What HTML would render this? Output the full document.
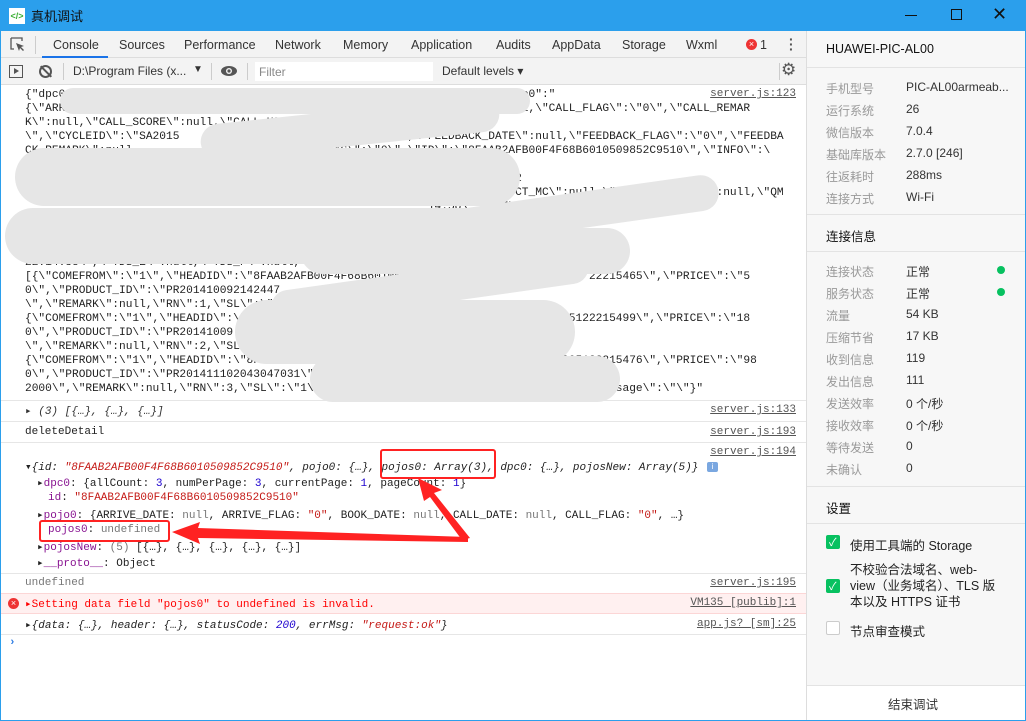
<!DOCTYPE html>
<html><head><meta charset="utf-8"><style>
*{margin:0;padding:0;box-sizing:border-box}
body{width:1026px;height:721px;overflow:hidden;background:#fff;font-family:"Liberation Sans","Noto Sans CJK SC",sans-serif;position:relative;font-size:12px;color:#333}
.abs{position:absolute}
#title{left:0;top:0;width:1026px;height:31px;background:#2b9fec;}
#win{left:0;top:31px;width:1026px;height:690px;border:1px solid #2b9fec;border-top:none}
.tab{position:absolute;top:38px;font-size:12.5px;color:#333}
.mono{font-family:"Liberation Mono","Noto Sans CJK SC",monospace;font-size:11px;white-space:pre;color:#222}
.ln{position:absolute;left:25px}
.src{position:absolute;right:230px;font-family:"Liberation Mono",monospace;font-size:11px;color:#555;text-decoration:underline}
.sep{position:absolute;left:1px;width:805px;height:1px;background:#e6e6e6}
.blob{position:absolute;background:#e6e6e6;border-radius:14px}
.rp{position:absolute;left:826px;font-size:12px;color:#999}
.rv{position:absolute;left:906px;font-size:12px;color:#333}
.rsep{position:absolute;left:807px;width:218px;height:1px;background:#e3e3e3}
.purple{color:#881391}.red{color:#c41a16}.blue{color:#1c00cf}.gray{color:#777}
.cb{position:absolute;left:826px;width:14px;height:14px;border-radius:2px;background:#07c160}
</style></head><body>
<div id="title" class="abs">
 <div class="abs" style="left:9px;top:8px;width:16px;height:16px;background:#fff;color:#3cb035;font-size:9px;font-weight:bold;text-align:center;line-height:16px">&lt;/&gt;</div>
 <div class="abs" style="left:31px;top:6px;font-size:13px;color:#111">真机调试</div>
 <div class="abs" style="left:905px;top:15px;width:12px;height:1px;background:#111"></div>
 <div class="abs" style="left:951px;top:9px;width:11px;height:11px;border:1px solid #111"></div>
 <div class="abs" style="left:992px;top:4px;font-size:18px;color:#111">✕</div>
</div>
<div id="win" class="abs"></div>
<div class="abs" style="left:1px;top:31px;width:805px;height:27px;background:#f3f3f3;border-bottom:1px solid #ddd"></div>
<svg class="abs" style="left:10px;top:37px" width="16" height="16"><path d="M1 1h11v3M1 1v11h3" fill="none" stroke="#555" stroke-width="1.3"/><path d="M6 6l8 3-3 1 3 3-1 1-3-3-1 3z" fill="#555"/></svg>
<div class="abs" style="left:35px;top:36px;width:1px;height:18px;background:#ccc"></div>
<div class="tab" style="left:53px">Console</div>
<div class="abs" style="left:42px;top:56px;width:66px;height:2px;background:#1a73e8"></div>
<div class="tab" style="left:119px">Sources</div>
<div class="tab" style="left:184px">Performance</div>
<div class="tab" style="left:275px">Network</div>
<div class="tab" style="left:343px">Memory</div>
<div class="tab" style="left:411px">Application</div>
<div class="tab" style="left:496px">Audits</div>
<div class="tab" style="left:552px">AppData</div>
<div class="tab" style="left:622px">Storage</div>
<div class="tab" style="left:686px">Wxml</div>
<div class="abs" style="left:746px;top:39px;width:11px;height:11px;border-radius:50%;background:#e33;color:#fff;font-size:9px;line-height:11px;text-align:center">×</div>
<div class="tab" style="left:760px">1</div>
<div class="abs" style="left:789px;top:37px;font-size:14px;color:#555;line-height:5px;font-weight:bold">·<br>·<br>·</div>
<div class="abs" style="left:1px;top:58px;width:805px;height:27px;background:#f3f3f3;border-bottom:1px solid #ddd"></div>
<div class="abs" style="left:9px;top:65px;width:14px;height:13px;border:1px solid #555"></div>
<div class="abs" style="left:14px;top:68px;width:0;height:0;border-left:5px solid #555;border-top:3.5px solid transparent;border-bottom:3.5px solid transparent"></div>
<div class="abs" style="left:39px;top:65px;width:13px;height:13px;border:2px solid #555;border-radius:50%"></div>
<div class="abs" style="left:45px;top:64px;width:2px;height:15px;background:#555;transform:rotate(-45deg)"></div>
<div class="abs" style="left:63px;top:63px;width:1px;height:17px;background:#ccc"></div>
<div class="abs" style="left:73px;top:64px;font-size:12px;color:#333">D:\Program Files (x...</div>
<div class="abs" style="left:193px;top:64px;font-size:10px;color:#333">▼</div>
<div class="abs" style="left:211px;top:63px;width:1px;height:17px;background:#ccc"></div>
<svg class="abs" style="left:220px;top:64px" width="18" height="14"><ellipse cx="9" cy="7" rx="8" ry="5" fill="#555"/><circle cx="9" cy="7" r="3" fill="#f3f3f3"/><circle cx="9" cy="7" r="1.6" fill="#555"/></svg>
<div class="abs" style="left:247px;top:63px;width:1px;height:17px;background:#ccc"></div>
<div class="abs" style="left:255px;top:62px;width:178px;height:19px;background:#fff"></div>
<div class="abs" style="left:259px;top:65px;font-size:12px;color:#888">Filter</div>
<div class="abs" style="left:442px;top:64px;font-size:12px;color:#333">Default levels ▾</div>
<div class="abs" style="left:779px;top:63px;width:1px;height:17px;background:#ccc"></div>
<div class="abs" style="left:781px;top:60px;font-size:17px;color:#555">⚙</div>
<div class="mono" style="position:absolute;left:25px;top:88px;line-height:14px;font-size:11.2px">{"dpc0                                                              ","pojo0":"
{\"ARR                                                                :null,\"CALL_FLAG\":\"0\",\"CALL_REMAR
K\":null,\"CALL_SCORE\":null,\"CALL_USER\"
\",\"CYCLEID\":\"SA2015                                  ,\"FEEDBACK_DATE\":null,\"FEEDBACK_FLAG\":\"0\",\"FEEDBA
CK_REMARK\":null                  ,\"FINISH_FLAG\":\"0\",\"ID\":\"8FAAB2AFB00F4F68B6010509852C9510\",\"INFO\":\

\",\"KH_ID\"                                                ,\" 2019-05-12
22:15:56\",\"ORDER_FLAG\":\"1\",\"PRICE\":null,\"PRODUCT_ID\":null,      CT_MC\":null,\"PRODUCT_MODEL\":null,\"QM
                                                            14:58\",\"REMARK\"                机(UUC-
                                                          22:14:58\",\"

\",\                                                                 _DATE\"       9-05-12
22:14:58\",\"TDS_E\":null,\"TDS_F\":null,\"TOTAL\":1210,\
[{\"COMEFROM\":\"1\",\"HEADID\":\"8FAAB2AFB00F4F68B601050                           22215465\",\"PRICE\":\"5
0\",\"PRODUCT_ID\":\"PR201410092142447
\",\"REMARK\":null,\"RN\":1,\"SL\":\"
{\"COMEFROM\":\"1\",\"HEADID\":\"8FAA                                         1905122215499\",\"PRICE\":\"18
0\",\"PRODUCT_ID\":\"PR20141009
\",\"REMARK\":null,\"RN\":2,\"SL\":\"1\",\"TOTAL\":\"180\"},
{\"COMEFROM\":\"1\",\"HEADID\":\"8FAAB2AFB00F4F68B6010509852C9510\"           C1905122215476\",\"PRICE\":\"98
0\",\"PRODUCT_ID\":\"PR201411102043047031\",
2000\",\"REMARK\":null,\"RN\":3,\"SL\":\"1\"                                      ,\"message\":\"\"}"</div>
<div class="blob" style="left:60px;top:88px;width:470px;height:26px;border-radius:13px"></div>
<div class="blob" style="left:200px;top:110px;width:300px;height:36px;border-radius:18px;transform:rotate(-6deg)"></div>
<div class="blob" style="left:15px;top:148px;width:505px;height:58px;border-radius:29px"></div>
<div class="blob" style="left:5px;top:208px;width:500px;height:56px;border-radius:28px"></div>
<div class="blob" style="left:400px;top:195px;width:320px;height:36px;border-radius:18px;transform:rotate(-8deg)"></div>
<div class="blob" style="left:300px;top:228px;width:330px;height:46px;border-radius:23px"></div>
<div class="blob" style="left:270px;top:270px;width:320px;height:34px;border-radius:17px;transform:rotate(-8deg)"></div>
<div class="blob" style="left:235px;top:300px;width:340px;height:64px;border-radius:32px"></div>
<div class="blob" style="left:310px;top:356px;width:310px;height:46px;border-radius:23px"></div>
<div class="src" style="top:88px">server.js:123</div>
<div class="sep" style="top:400px"></div>
<div class="mono ln" style="top:404px;color:#333">▸ <i>(3) [{…}, {…}, {…}]</i></div>
<div class="src" style="top:404px">server.js:133</div>
<div class="sep" style="top:421px"></div>
<div class="mono ln" style="top:426px">deleteDetail</div>
<div class="src" style="top:426px">server.js:193</div>
<div class="sep" style="top:442px"></div>
<div class="src" style="top:446px">server.js:194</div>
<div class="mono ln" style="top:460px">▾<i>{id: <span class="red">"8FAAB2AFB00F4F68B6010509852C9510"</span>, pojo0: {…}, pojos0: Array(3), dpc0: {…}, pojosNew: Array(5)}</i></div>
<div class="abs" style="left:707px;top:462px;width:11px;height:10px;background:#7aa7e0;border-radius:2px;color:#fff;font-size:8px;text-align:center;line-height:10px">i</div>
<div class="mono ln" style="left:37px;top:476px">▸<span class="purple">dpc0</span>: {allCount: <span class="blue">3</span>, numPerPage: <span class="blue">3</span>, currentPage: <span class="blue">1</span>, pageCount: <span class="blue">1</span>}</div>
<div class="mono ln" style="left:48px;top:492px"><span class="purple">id</span>: <span class="red">"8FAAB2AFB00F4F68B6010509852C9510"</span></div>
<div class="mono ln" style="left:37px;top:508px">▸<span class="purple">pojo0</span>: {ARRIVE_DATE: <span class="gray">null</span>, ARRIVE_FLAG: <span class="red">"0"</span>, BOOK_DATE: <span class="gray">null</span>, CALL_DATE: <span class="gray">null</span>, CALL_FLAG: <span class="red">"0"</span>, …}</div>
<div class="mono ln" style="left:48px;top:524px"><span class="purple">pojos0</span>: <span class="gray">undefined</span></div>
<div class="mono ln" style="left:37px;top:540px">▸<span class="purple">pojosNew</span>: <span class="gray">(5)</span> [{…}, {…}, {…}, {…}, {…}]</div>
<div class="mono ln" style="left:37px;top:556px">▸<span class="purple">__proto__</span>: Object</div>
<div class="sep" style="top:573px"></div>
<div class="mono ln" style="top:577px;color:#777">undefined</div>
<div class="src" style="top:577px">server.js:195</div>
<div class="abs" style="left:1px;top:593px;width:805px;height:21px;background:#fff0f0;border-top:1px solid #fcd6d6;border-bottom:1px solid #fcd6d6"></div>
<div class="abs" style="left:8px;top:598px;width:11px;height:11px;border-radius:50%;background:#e33;color:#fff;font-size:9px;line-height:11px;text-align:center">×</div>
<div class="mono ln" style="top:597px;color:#f00">▸Setting data field "pojos0" to undefined is invalid.</div>
<div class="src" style="top:597px">VM135 [publib]:1</div>
<div class="mono ln" style="top:618px">▸<i>{data: {…}, header: {…}, statusCode: <span class="blue">200</span>, errMsg: <span class="red">"request:ok"</span>}</i></div>
<div class="src" style="top:618px">app.js? [sm]:25</div>
<div class="sep" style="top:634px"></div>
<div class="mono ln" style="left:9px;top:637px;color:#2a7ae2;font-weight:bold">›</div>
<div class="abs" style="left:380px;top:449px;width:116px;height:30px;border:2.5px solid #f22;border-radius:3px"></div>
<div class="abs" style="left:39px;top:520px;width:131px;height:22px;border:2.5px solid #f22;border-radius:3px"></div>
<svg class="abs" style="left:0;top:0" width="806" height="721"><polygon points="418,478 442,490 434,493 470,538 462,540 430,497 424,501" fill="#f22"/><polygon points="172,532 200,522 198,528 468,537 468,542 198,538 200,544" fill="#f22"/></svg>
<div class="abs" style="left:806px;top:31px;width:1px;height:689px;background:#ddd"></div>
<div class="abs" style="left:807px;top:31px;width:218px;height:655px;background:#f7f7f7"></div>
<div class="abs" style="left:826px;top:42px;font-size:12.5px;color:#111">HUAWEI-PIC-AL00</div>
<div class="rsep" style="top:67px"></div>
<div class="rp" style="top:80px">手机型号</div><div class="rv" style="top:80px">PIC-AL00armeab...</div>
<div class="rp" style="top:102px">运行系统</div><div class="rv" style="top:102px">26</div>
<div class="rp" style="top:124px">微信版本</div><div class="rv" style="top:124px">7.0.4</div>
<div class="rp" style="top:146px">基础库版本</div><div class="rv" style="top:146px">2.7.0 [246]</div>
<div class="rp" style="top:168px">往返耗时</div><div class="rv" style="top:168px">288ms</div>
<div class="rp" style="top:190px">连接方式</div><div class="rv" style="top:190px">Wi-Fi</div>
<div class="rsep" style="top:214px"></div>
<div class="abs" style="left:826px;top:226px;font-size:12.5px;color:#111">连接信息</div>
<div class="rsep" style="top:251px"></div>
<div class="rp" style="top:263px">连接状态</div><div class="rv" style="top:263px">正常</div>
<div class="abs" style="left:997px;top:266px;width:8px;height:8px;border-radius:50%;background:#07c160"></div>
<div class="rp" style="top:285px">服务状态</div><div class="rv" style="top:285px">正常</div>
<div class="abs" style="left:997px;top:288px;width:8px;height:8px;border-radius:50%;background:#07c160"></div>
<div class="rp" style="top:307px">流量</div><div class="rv" style="top:307px">54 KB</div>
<div class="rp" style="top:329px">压缩节省</div><div class="rv" style="top:329px">17 KB</div>
<div class="rp" style="top:351px">收到信息</div><div class="rv" style="top:351px">119</div>
<div class="rp" style="top:373px">发出信息</div><div class="rv" style="top:373px">111</div>
<div class="rp" style="top:395px">发送效率</div><div class="rv" style="top:395px">0 个/秒</div>
<div class="rp" style="top:417px">接收效率</div><div class="rv" style="top:417px">0 个/秒</div>
<div class="rp" style="top:439px">等待发送</div><div class="rv" style="top:439px">0</div>
<div class="rp" style="top:461px">未确认</div><div class="rv" style="top:461px">0</div>
<div class="rsep" style="top:486px"></div>
<div class="abs" style="left:826px;top:498px;font-size:12.5px;color:#111">设置</div>
<div class="rsep" style="top:523px"></div>
<div class="cb" style="top:535px"></div><div class="abs" style="left:829px;top:534px;color:#fff;font-size:11px">✓</div>
<div class="abs" style="left:850px;top:535px;font-size:12.5px;color:#222">使用工具端的 Storage</div>
<div class="cb" style="top:579px"></div><div class="abs" style="left:829px;top:578px;color:#fff;font-size:11px">✓</div>
<div class="abs" style="left:850px;top:562px;white-space:nowrap;font-size:12.5px;line-height:16px;color:#222">不校验合法域名、web-<br>view（业务域名）、TLS 版<br>本以及 HTTPS 证书</div>
<div class="abs" style="left:826px;top:621px;width:14px;height:14px;border:1px solid #ccc;background:#fff;border-radius:2px"></div>
<div class="abs" style="left:850px;top:621px;font-size:12.5px;color:#222">节点审查模式</div>
<div class="rsep" style="top:685px"></div>
<div class="abs" style="left:807px;top:686px;width:218px;height:34px;background:#fff"></div>
<div class="abs" style="left:888px;top:694px;font-size:12.5px;color:#333">结束调试</div>
</body></html>
